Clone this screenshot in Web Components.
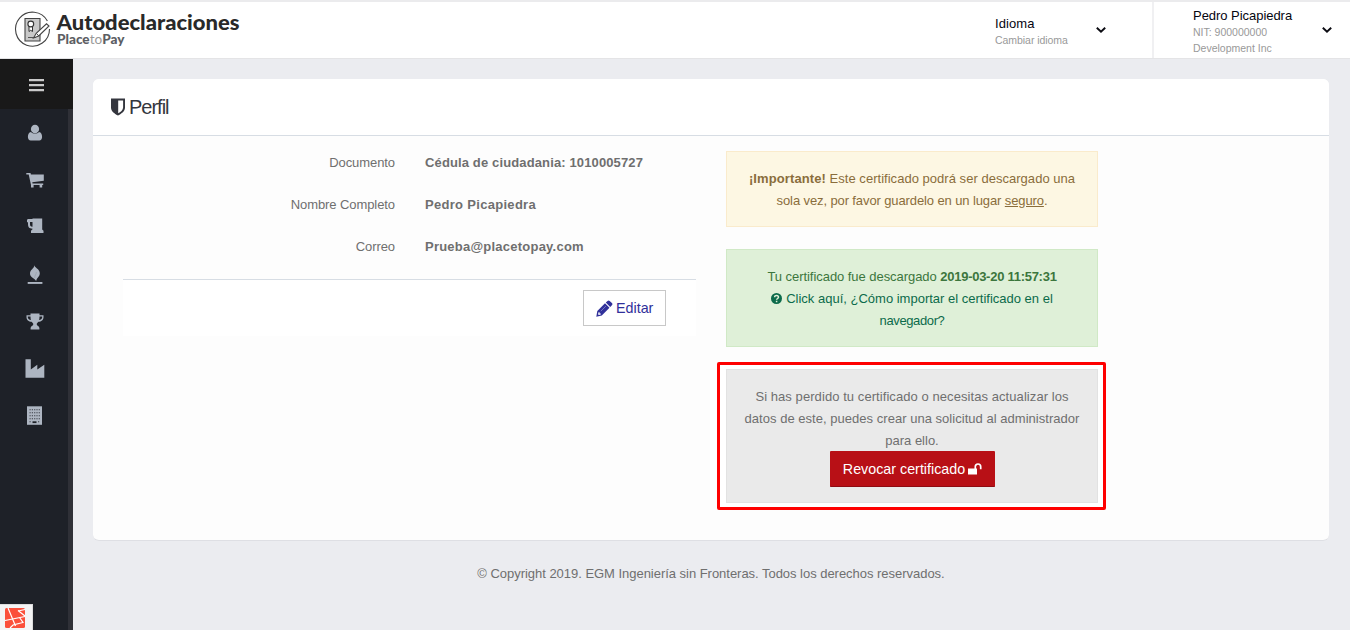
<!DOCTYPE html>
<html lang="es">
<head>
<meta charset="utf-8">
<title>Perfil</title>
<style>
html,body{margin:0;height:100%;overflow:hidden}
body{font:13px/22px "Liberation Sans",Arial,sans-serif;color:#6f6f6f;background:#ebecf0}
</style>
</head>
<body>
<profile-app></profile-app>
<script>
function define(name, html) {
  const tpl = document.createElement('template');
  tpl.innerHTML = html;
  customElements.define(name, class extends HTMLElement {
    constructor() {
      super();
      this.attachShadow({mode: 'open'}).append(tpl.content.cloneNode(true));
    }
  });
}

define('brand-logo', `
<style>:host{display:block;width:250px;height:56px}svg{display:block}</style>
<svg width="250" height="56" viewBox="0 2 250 56">
  <path d="M47.400 21A17 17 0 1 0 49.500 29" fill="none" stroke="#444" stroke-width="1.100"/>
  <path d="M25 18.500h15v22.500H25z" fill="#c9c9c9" stroke="#444" stroke-width="1.100"/>
  <path d="M29 26v5.500l1.700-1.200 1.800 1.200V26" fill="#fff" stroke="#333" stroke-width="1"/>
  <circle cx="30.800" cy="24" r="2.900" fill="#fff" stroke="#333" stroke-width="1.100"/>
  <path d="M28 37.500h8" stroke="#555" fill="none"/>
  <path d="M33.500 38l2.700-4.700L46.500 23.800l2.500 2.200-10.300 10z" fill="#fff" stroke="#444" stroke-width="1.100"/>
  <path d="M36.500 33.500l2.300 2.500" stroke="#444"/>
  <text x="56.500" y="30" textLength="183" lengthAdjust="spacingAndGlyphs" font-family="Lato,sans-serif" font-size="20.500" font-weight="900" fill="#292929">Autodeclaraciones</text>
  <text x="57" y="44" textLength="67.500" lengthAdjust="spacingAndGlyphs" font-family="Lato,sans-serif" font-size="12.500" font-weight="900" fill="#5c5e63">Place<tspan font-weight="400" fill="#999">to</tspan>Pay</text>
</svg>`);

define('header-menu', `
<style>
:host{display:flex;align-items:center;box-sizing:border-box;height:56px}
.text{flex:1;padding-top:2px}
.title{font-size:13px;line-height:17px;color:#050510}
.sub{display:block;font-size:10.500px;line-height:16px;color:#999}
svg{display:block;flex:none}
</style>
<div class="text"><div class="title"><slot name="title"></slot></div><div class="sub"><slot></slot></div></div>
<svg width="12" height="10" viewBox="0 0 12 10"><path d="M1.800 2.800L6 6.800l4.200-4" fill="none" stroke="#0b0b12" stroke-width="1.900"/></svg>`);

define('app-header', `
<style>
:host{display:flex;box-sizing:border-box;height:59px;padding-right:1px;border-top:2px solid #ebebed;border-bottom:1px solid #e4e4e6;background:#fff}
brand-logo{margin-right:auto}
.lang{width:159px;padding-right:45px;border-right:2px solid #f0f0f2;box-sizing:border-box}
.user{width:195px;padding:0 16px 0 39px;box-sizing:border-box}
.lang [slot]{letter-spacing:.1px}
.lang div{letter-spacing:-.05px}
.user [slot]{letter-spacing:-.04px}
</style>
<brand-logo></brand-logo>
<header-menu class="lang"><span slot="title">Idioma</span><div>Cambiar idioma</div></header-menu>
<header-menu class="user"><span slot="title">Pedro Picapiedra</span><div>NIT: 900000000</div><div>Development Inc</div></header-menu>`);

define('side-nav', `
<style>
:host{display:block;box-sizing:border-box;width:73px;background:#1e2128;border-right:5px solid #2f3037;position:relative}
.toggle{width:73px;height:50px;background:#191919}
svg{display:block}
nav svg{fill:#adb5c1}
.debug{position:absolute;left:0;bottom:0;width:32px;height:25px;background:#f4f4f5;border:solid #ddd;border-width:1px 1px 0 0}
</style>
<div class="toggle"><svg width="73" height="50" viewBox="0 59 73 50"><path d="M29 79h15v2.200H29zm0 5h15v2.200H29zm0 5h15v2.200H29z" fill="#cacaca"/></svg></div>
<nav>
<svg width="68" height="47" viewBox="0 109 68 47"><ellipse cx="35" cy="129" rx="4.100" ry="4.300"/><path d="M31 132c1 1 2.400 1.600 4 1.600s3-.6 4-1.600c2.300.3 3.100 2.400 3.100 5 0 1.900-1.100 3.400-2.800 3.400h-8.600c-1.700 0-2.800-1.500-2.800-3.400 0-2.600.8-4.700 3.100-5z"/></svg>
<svg width="68" height="47" viewBox="0 156 68 47"><path d="M26.300 173h4.200l.4 1.400h12.900v6.300l-11.500 1.600.2 1.100h10.700v1.500H31l-2.300-10.400h-2.400z"/><path d="M31 184h2.600v3.400H31zm8.600 0h2.600v3.400h-2.600z"/></svg>
<svg width="68" height="47" viewBox="0 203 68 47"><path fill-rule="evenodd" d="M32.500 218.600h9.700v10.900l1.300 1.300v2.200H31v-2.200l1.500-1.500v-.6c-3.500 0-4.500-1.600-4.500-4.600v-1.500l-1-.6v-2.200l1-.7h4.500zM30 222v2c0 2 .5 2.700 2.500 2.700V222z"/></svg>
<svg width="68" height="47" viewBox="0 250 68 47"><path d="M34.300 265c-.2 2.600 5.500 3.700 5.500 8.200 0 3.800-3.600 4.800-3.600 8-1.300-2.700-6.200-3.500-6.200-7.600 0-4 4.300-4.800 4.300-8.600z"/><path d="M36.300 272c.3 2.500-1.800 3-1.500 6" fill="none" stroke="#8d949e" stroke-width=".5"/><path d="M27.700 282h14.700v1.900H27.700z"/></svg>
<svg width="68" height="47" viewBox="0 297 68 47"><path fill-rule="evenodd" d="M30.500 313.500h9v1.700h4v2.100c0 2.800-2.300 4.400-5 4.500-.7.900-1.800 1.300-1.800 2.500 0 1.500 2.700 1.800 2.700 3.600v1.600h-8.800v-1.600c0-1.800 2.700-2.100 2.700-3.600 0-1.200-1.100-1.600-1.800-2.500-2.700-.1-5-1.700-5-4.500v-2.100h4zm0 3h-2.700v.8c0 1.500 1.300 2.500 3.100 2.800-.3-1-.4-2.300-.4-3.600zm9 0c0 1.300-.1 2.600-.4 3.600 1.800-.3 3.100-1.300 3.100-2.800v-.8z"/></svg>
<svg width="68" height="47" viewBox="0 344 68 47"><path d="M25.500 377.700V359.300h5.300v10.200l6.500-4.700v4.700l7-4.700v12.900z"/></svg>
<svg width="68" height="47" viewBox="0 391 68 47"><path d="M27 406.300h15v18.500H27z"/><path d="M29.500 409.700h10.500m-10.500 3h10.500m-10.500 3h10.500m-10.500 3h10.500m-10.500 3h2m6.500 0h2" stroke="#3a3e46" stroke-width="1.100" stroke-dasharray="1.200 1.100" fill="none"/><path d="M32.500 421.300h4v1.800h-4z" fill="#1e2128"/></svg>
</nav>
<div class="debug"><svg width="32" height="25" viewBox="0 605 32 25"><rect x="5" y="608" width="20" height="20" rx="1.500" fill="#fb503b"/><path d="M8 608l7.500 18M5 620.500l20-4M18 610.500l7 5.500M18 611l7-1.500M10 628l3-3 10-2.500-3.500-5" fill="none" stroke="#fff" stroke-width="1.200"/></svg></div>`);

define('field-row', `
<style>:host{display:grid;grid-template-columns:272px 1fr;column-gap:30px;position:relative;top:1px}
.label{text-align:right;letter-spacing:-.08px}b{letter-spacing:var(--value-spacing,.13px)}</style>
<div class="label"><slot name="label"></slot></div><b><slot></slot></b>`);

define('notice-box', `
<style>
:host{display:block;box-sizing:border-box;padding:16px 15px 14px;border:1px solid #e2e2e2;background:#eaeaea;text-align:center;position:relative;white-space:nowrap}
:host([kind=warning]){background:#fdf7e3;border-color:#faebcc;color:#8a6d3b}
:host([kind=success]){background:#dff0d8;border-color:#d0e9c6;color:#3c763d}
:host([marked]){box-shadow:0 0 0 6px #fff}
:host([marked])::before{content:"";position:absolute;inset:-8px -9px -8px -10px;border:3px solid #fe0000;border-radius:2px}
</style><slot></slot>`);

define('profile-card', `
<style>
:host{display:flex;flex-direction:column;box-sizing:border-box;height:462px;border-radius:6px;background:#fdfdfd;border-bottom:1px solid #dedfe4;overflow:hidden}
header{display:flex;align-items:center;gap:4px;height:56px;padding-left:18px;background:#fff;border-bottom:1px solid #d7dde4}
h1{margin:0;font-size:20px;font-weight:400;letter-spacing:-1px;color:#34363e}
svg{display:block;flex:none}
main{display:grid;grid-template-columns:573px 372px;column-gap:30px;padding:15px 30px}
.fields{display:grid;gap:20px}
.actions{display:flex;justify-content:flex-end;box-sizing:border-box;height:57px;margin-top:22px;padding:10px 30px;border-top:1px solid #d7dde4;background:#fff}
.edit{display:flex;align-items:center;box-sizing:border-box;width:83px;height:36px;padding-left:12px;gap:3px;border:1px solid #c8c8c8;font-size:14.300px;color:#30309a}
.notices{display:grid;gap:22px;align-content:start}
.link{color:#0c6b4b}.link svg{display:inline-block;vertical-align:-1px;margin-right:4px}
.revoke{display:flex;align-items:center;justify-content:center;gap:3px;box-sizing:border-box;width:165px;height:36px;margin:-1px auto 1px;padding-left:1px;background:#b81016;border-bottom:1px solid #8f0b11;border-radius:1px;color:#fff;font-size:14.300px}
</style>
<header><svg width="14" height="18" viewBox="0 0 14 18"><path fill-rule="evenodd" d="M0 .5h14v9c0 4-4 6.500-7 8C4 16 0 13.500 0 9.500zM7.200 2.500v12.800c2.300-1.300 4.900-3.200 4.900-5.800v-7z" fill="#34363e"/></svg><h1>Perfil</h1></header>
<main>
<section><div class="fields">
<field-row><span slot="label">Documento</span>Cédula de ciudadania: 1010005727</field-row>
<field-row style="--value-spacing:.3px"><span slot="label">Nombre Completo</span>Pedro Picapiedra</field-row>
<field-row style="--value-spacing:.23px"><span slot="label">Correo</span>Prueba@placetopay.com</field-row>
</div>
<div class="actions"><div class="edit"><svg width="17" height="17" viewBox="0 0 17 17"><path fill-rule="evenodd" d="M.3 16.700l1-5.700L9 3.300l4.500 4.500-7.700 7.700zM2.500 12.300l-.4 2 .7.700 2-.4v-1.100H3.600v-1.200z" fill="#30309a"/><path d="M9.800 2.600L11.500.9c.7-.7 1.500-.7 2.200 0l2.200 2.200c.7.700.7 1.500 0 2.200L14.200 7z" fill="#30309a"/><path d="M4.800 11.200l5-5" stroke="#aaaade" stroke-width=".6"/></svg><span>Editar</span></div></div>
</section>
<section class="notices">
<notice-box kind="warning"><span style="letter-spacing:.03px"><b style="letter-spacing:.1px">¡Importante!</b> Este certificado podrá ser descargado una</span><br><span style="letter-spacing:-.11px">sola vez, por favor guardelo en un lugar <u>seguro</u>.</span></notice-box>
<notice-box kind="success"><span style="letter-spacing:-.05px">Tu certificado fue descargado <b style="letter-spacing:-.27px">2019-03-20 11:57:31</b></span><br><span class="link"><svg width="11" height="11" viewBox="0 0 11 11"><circle cx="5.500" cy="5.500" r="5.500" fill="#0c6b4b"/><path d="M3.600 4.200c0-2.300 3.900-2.200 3.900 0 0 1.300-1.900 1.300-1.900 2.600M5.600 7.700v1.500" fill="none" stroke="#dff0d8" stroke-width="1.500"/></svg>Click aquí, ¿Cómo importar el certificado en el<br><span style="letter-spacing:-.38px">navegador?</span></span></notice-box>
<notice-box marked><span style="letter-spacing:.07px">Si has perdido tu certificado o necesitas actualizar los</span><br><span style="letter-spacing:.03px">datos de este, puedes crear una solicitud al administrador</span><br>para ello.<div class="revoke"><span>Revocar certificado</span><svg width="14" height="12" viewBox="0 0 14 12"><path d="M0 5.500h9v6H0z" fill="#fff"/><path d="M7.300 6V3.700a2.700 2.700 0 0 1 5.400 0v2.500" fill="none" stroke="#fff" stroke-width="1.700"/></svg></div></notice-box>
</section>
</main>`);

define('profile-app', `
<style>
:host{display:grid;grid-template:59px 1fr/73px 1fr;width:1350px;height:630px}
app-header{grid-column:1/3}
.content{padding:20px 21px 0 20px}
footer{margin-top:22px;text-align:center;letter-spacing:-.03px}
</style>
<app-header></app-header><side-nav></side-nav>
<div class="content"><profile-card></profile-card><footer>© Copyright 2019. EGM Ingeniería sin Fronteras. Todos los derechos reservados.</footer></div>`);
</script>
</body>
</html>
